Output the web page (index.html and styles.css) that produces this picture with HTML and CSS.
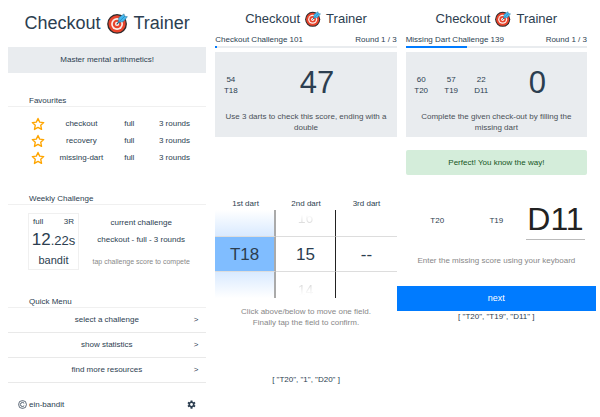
FILE: index.html
```html
<!DOCTYPE html>
<html lang="en">
<head>
<meta charset="utf-8">
<title>Checkout Trainer</title>
<link rel="stylesheet" href="styles.css">
</head>
<body>
<svg class="defs" aria-hidden="true">
  <symbol id="target" viewBox="0 0 24 24">
    <circle cx="11.5" cy="12.5" r="11.3" fill="#2b2a2c"/>
    <circle cx="11.5" cy="12.5" r="9.8" fill="#e8442c"/>
    <circle cx="11.5" cy="12.5" r="6.8" fill="#fbeeea"/>
    <circle cx="11.5" cy="12.5" r="4.9" fill="#e8442c"/>
    <circle cx="11.5" cy="12.5" r="2.4" fill="#fbeeea"/>
    <path d="M11 13 16 8" stroke="#234c66" stroke-width="1.3"/>
    <path d="M12.800 10.800 13.600 5 19.500 1 20 3.600 23.300 4.200 18.800 9.800Z" fill="#45b8ee" stroke="#2b6f93" stroke-width=".6"/>
    <path d="M14 9.800 20.500 3.500" stroke="#1b7fb5" stroke-width=".8"/>
  </symbol>
  <symbol id="star" viewBox="0 0 24 24">
    <path d="M12 2.500 14.900 8.800 21.800 9.600 16.700 14.300 18.100 21.300 12 17.800 5.900 21.300 7.300 14.300 2.200 9.600 9.100 8.800Z" fill="none" stroke="#ffa500" stroke-width="2.300" stroke-linejoin="round"/>
  </symbol>
  <symbol id="gear" viewBox="0 0 24 24">
    <path fill="#2c3e50" fill-rule="evenodd" d="M9.500 1h5l.5 3.500 2 1.200 3.200-1.300 2.500 4.300-2.700 2.100v2.400l2.700 2.100-2.500 4.300-3.200-1.300-2 1.200-.5 3.500h-5L9 19.500l-2-1.200-3.200 1.300-2.500-4.300L4 13.200v-2.400L1.300 8.700l2.500-4.300L7 5.700l2-1.200ZM12 8.200a3.800 3.800 0 1 0 0 7.600 3.800 3.800 0 0 0 0-7.600Z"/>
  </symbol>
  <symbol id="copyright" viewBox="0 0 24 24">
    <circle cx="12" cy="12" r="10.500" fill="none" stroke="#2c3e50" stroke-width="2"/>
    <path d="M16.500 9a5.500 5.500 0 1 0 0 6" fill="none" stroke="#2c3e50" stroke-width="2.200"/>
  </symbol>
</svg>

<main class="screens">
  <section class="screen home">
    <h1 class="title title-large">Checkout <svg class="target"><use href="#target"/></svg> Trainer</h1>
    <p class="banner">Master mental arithmetics!</p>

    <h2 class="heading">Favourites</h2>
    <table class="favourites">
      <tbody>
        <tr><td><svg class="star"><use href="#star"/></svg></td><td>checkout</td><td>full</td><td>3 rounds</td></tr>
        <tr><td><svg class="star"><use href="#star"/></svg></td><td>recovery</td><td>full</td><td>3 rounds</td></tr>
        <tr><td><svg class="star"><use href="#star"/></svg></td><td>missing-dart</td><td>full</td><td>3 rounds</td></tr>
      </tbody>
    </table>

    <h2 class="heading">Weekly Challenge</h2>
    <div class="weekly">
      <button class="score-card" type="button">
        <span class="score-top"><span>full</span><span>3R</span></span>
        <span class="score-time"><span class="seconds">12</span>.22s</span>
        <span class="score-name">bandit</span>
      </button>
      <div class="weekly-text">
        <p>current challenge</p>
        <p>checkout - full - 3 rounds</p>
        <p class="hint-small">tap challenge score to compete</p>
      </div>
    </div>

    <h2 class="heading">Quick Menu</h2>
    <nav class="menu">
      <a href="#select"><span>select a challenge</span><span>&gt;</span></a>
      <a href="#statistics"><span>show statistics</span><span>&gt;</span></a>
      <a href="#resources"><span>find more resources</span><span>&gt;</span></a>
    </nav>

    <footer class="footer">
      <a href="#author"><svg class="icon"><use href="#copyright"/></svg>ein-bandit</a>
      <button type="button" aria-label="Settings"><svg class="icon"><use href="#gear"/></svg></button>
    </footer>
  </section>

  <section class="screen">
    <h1 class="title">Checkout <svg class="target"><use href="#target"/></svg> Trainer</h1>
    <div class="status"><span>Checkout Challenge 101</span><span>Round 1 / 3</span></div>
    <div class="progress"><div class="progress-bar" style="width:1%"></div></div>
    <div class="board">
      <div class="board-row">
        <div class="throw"><span>54</span><span>T18</span></div>
        <strong class="remaining">47</strong>
      </div>
      <p>Use 3 darts to check this score, ending with a double</p>
    </div>

    <div class="picker">
      <div class="dart active">
        <span class="dart-label">1st dart</span>
        <button class="ghost" type="button" aria-label="Up"></button>
        <button class="value" type="button">T18</button>
        <button class="ghost below" type="button" aria-label="Down"></button>
      </div>
      <div class="dart">
        <span class="dart-label">2nd dart</span>
        <button class="ghost" type="button"><span>16</span></button>
        <button class="value" type="button">15</button>
        <button class="ghost below" type="button"><span>14</span></button>
      </div>
      <div class="dart">
        <span class="dart-label">3rd dart</span>
        <button class="ghost" type="button" aria-label="Up"></button>
        <button class="value" type="button">--</button>
        <button class="ghost below" type="button" aria-label="Down"></button>
      </div>
    </div>
    <p class="hint picker-hint">Click above/below to move one field.<br>Finally tap the field to confirm.</p>
    <p class="solution solution-late">[ "T20", "1", "D20" ]</p>
  </section>

  <section class="screen">
    <h1 class="title">Checkout <svg class="target"><use href="#target"/></svg> Trainer</h1>
    <div class="status"><span>Missing Dart Challenge 139</span><span>Round 1 / 3</span></div>
    <div class="progress"><div class="progress-bar" style="width:34%"></div></div>
    <div class="board">
      <div class="board-row">
        <div class="throw"><span>60</span><span>T20</span></div>
        <div class="throw"><span>57</span><span>T19</span></div>
        <div class="throw"><span>22</span><span>D11</span></div>
        <strong class="remaining">0</strong>
      </div>
      <p>Complete the given check-out by filling the missing dart</p>
    </div>
    <p class="alert" role="status">Perfect! You know the way!</p>
    <div class="answer">
      <span>T20</span>
      <span>T19</span>
      <input type="text" value="D11" aria-label="Missing dart">
    </div>
    <p class="hint">Enter the missing score using your keyboard</p>
    <button class="next" type="button">next</button>
    <p class="solution">[ "T20", "T19", "D11" ]</p>
  </section>
</main>
</body>
</html>
```
FILE: styles.css
```css
* { box-sizing: border-box; }
body {
  margin: 0;
  background: #fff;
  color: #2c3e50;
  font: 8px/11px "Liberation Sans", Arial, sans-serif;
}
h1, h2, p { margin: 0; font-weight: 400; }
h2 { font-size: 8px; }
button, input { margin: 0; padding: 0; border: 0; background: none; color: inherit; font: inherit; border-radius: 0; }
a { color: inherit; text-decoration: none; }
svg { display: block; }
.defs { position: absolute; width: 0; height: 0; }

.screens {
  display: grid;
  grid-template-columns: 198fr 181fr 181fr;
  gap: 9px;
  padding: 0 13px 0 8px;
}
.screen { min-width: 0; text-align: center; }

.title {
  display: flex;
  align-items: center;
  justify-content: center;
  gap: 5px;
  height: 34px;
  padding-top: 3px;
  font-size: 13px;
}
.title .target { width: 16px; height: 16px; }
.title-large { gap: 6px; height: 47px; padding-top: 0; font-size: 18px; }
.title-large .target { width: 21px; height: 21px; }

/* Home */
.banner { padding: 8px; line-height: 10px; background: #e9ecef; }
.heading {
  padding: 22px 21px 0;
  border-bottom: 1px solid #f0f0f0;
  text-align: left;
}
.favourites { width: 100%; margin: 8px 0 5px; padding: 0 7px 0 14px; border-collapse: separate; border-spacing: 0; table-layout: fixed; }
.favourites td { height: 17px; padding: 0; }
.favourites td:nth-child(1) { width: 18%; }
.favourites td:nth-child(2) { width: 31%; }
.favourites td:nth-child(3) { width: 23%; }
.star { width: 14px; height: 14px; margin: 0 auto; }

.weekly { display: flex; padding: 8px 3px 4px 20px; }
.score-card { display: flex; flex-direction: column; width: 51px; height: 57px; padding: 2px 4px 0; border: 1px solid #f0f0f0; }
.score-top { display: flex; justify-content: space-between; align-self: stretch; line-height: 12px; }
.score-time { align-self: center; font-size: 13px; line-height: 24px; }
.seconds { font-size: 17px; }
.score-name { align-self: center; font-size: 11px; line-height: 14px; }
.weekly-text { flex: 1; padding-top: 1px; line-height: 17px; }
.hint-small { padding-top: 5px; color: #888; font-size: 7px; }

.menu a { display: flex; padding-right: 8px; border-bottom: 1px solid #e9e9e9; line-height: 24px; }
.menu span:first-child { flex: 1; padding-left: 12px; }
.footer { display: flex; align-items: center; justify-content: space-between; padding: 16px 10px 0; }
.footer a { display: flex; align-items: center; gap: 2px; }
.icon { width: 9px; height: 9px; }

/* Challenge screens */
.status { display: flex; justify-content: space-between; line-height: 12px; }
.progress { height: 2px; margin-bottom: 4px; background: #e9ecef; }
.progress-bar { height: 2px; background: #007bff; }
.board { padding: 11px 8px 4px; background: #e9ecef; }
.board p { color: #495057; }
.board-row { display: flex; align-items: center; height: 40px; margin-bottom: 8px; }
.throw { display: flex; flex-direction: column; width: 30px; padding: 4px 15px 0 0; align-items: center; }
.throw span { white-space: nowrap; }
.remaining { flex: 1; padding-right: 8px; font-size: 31px; font-weight: 400; line-height: 40px; }
.hint { color: #888; }

.picker { display: grid; grid-template-columns: repeat(3, 1fr); margin-top: 61px; }
.dart { display: flex; flex-direction: column; }
.dart-label { line-height: 12px; }
.ghost, .value { border-right: 1px solid #222; }
.dart:last-child button { border-right: 0; }
.ghost { height: 26px; font-size: 14px; line-height: 16px; padding-bottom: 10px; }
.ghost.below { padding: 10px 0 0; }
.ghost span { display: block; color: transparent; background: linear-gradient(#fff 30%, #d0d0d0) text; }
.ghost.below span { background: linear-gradient(#d0d0d0, #fff 80%) text; }
.value { height: 36px; border-top: 1px solid #ddd; border-bottom: 1px solid #ddd; font-size: 17px; }
.active .ghost { background: linear-gradient(#fff, #d9eaff); }
.active .ghost.below { background: linear-gradient(#d9eaff, #fff); }
.active .value { background: #80bdff; }
.active button { border-right: 2px solid #aaa; }
.picker-hint { padding-top: 8px; }
.solution-late { padding-top: 46px; }

.alert { margin: 13px 0 25px; padding: 7px; border-radius: 2px; background: #d4edda; color: #155724; }
.answer { display: grid; grid-template-columns: repeat(3, 1fr); align-items: center; margin-bottom: 15px; padding: 0 2px; }
.answer input { width: 100%; height: 40px; border-bottom: 1px solid #bbb; color: #222; font-size: 32px; text-align: center; }
.next { display: block; width: calc(100% + 18px); margin: 20px -9px 0; background: #007bff; color: #fff; font-size: 9px; line-height: 25px; }
```
